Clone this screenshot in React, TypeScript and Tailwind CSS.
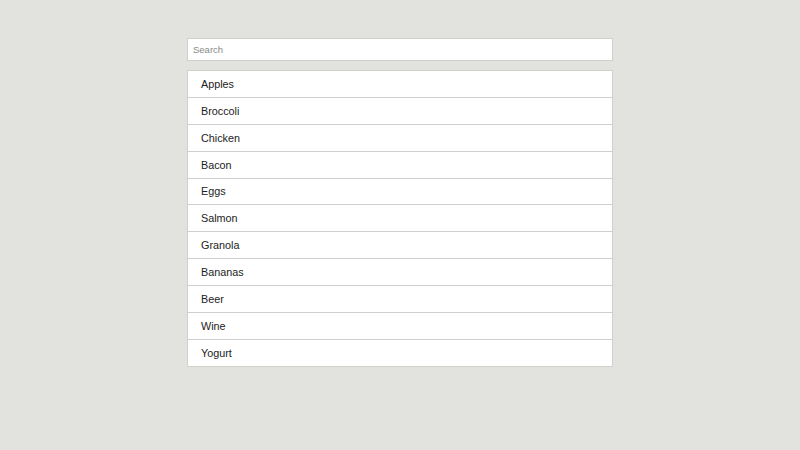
import { useState } from "react";

const items = [
  "Apples",
  "Broccoli",
  "Chicken",
  "Bacon",
  "Eggs",
  "Salmon",
  "Granola",
  "Bananas",
  "Beer",
  "Wine",
  "Yogurt",
];

export default function App() {
  const [query, setQuery] = useState("");

  const filtered = items.filter((item) =>
    item.toLowerCase().includes(query.toLowerCase()),
  );

  return (
    <div className="min-h-screen w-full bg-[#e2e3de] font-['Liberation_Sans',Arial,sans-serif] pt-[38px]">
      <div className="mx-auto w-[426px]">
        <input
          type="text"
          value={query}
          onChange={(e) => setQuery(e.target.value)}
          placeholder="Search"
          className="block w-full h-[23px] bg-white border border-[#cfd0cc] px-[5px] text-[9.5px] text-[#333] placeholder:text-[#8a8a8a] outline-none"
        />

        <ul className="mt-[9px] bg-white border border-[#cfd0cc]">
          {filtered.map((item, i) => (
            <li
              key={item}
              className={`flex items-center pl-[13px] text-[10.8px] text-[#222] ${
                i > 0 ? "h-[26.9px] border-t border-[#cfd0cc]" : "h-[25.9px]"
              }`}
            >
              {item}
            </li>
          ))}
        </ul>
      </div>
    </div>
  );
}
